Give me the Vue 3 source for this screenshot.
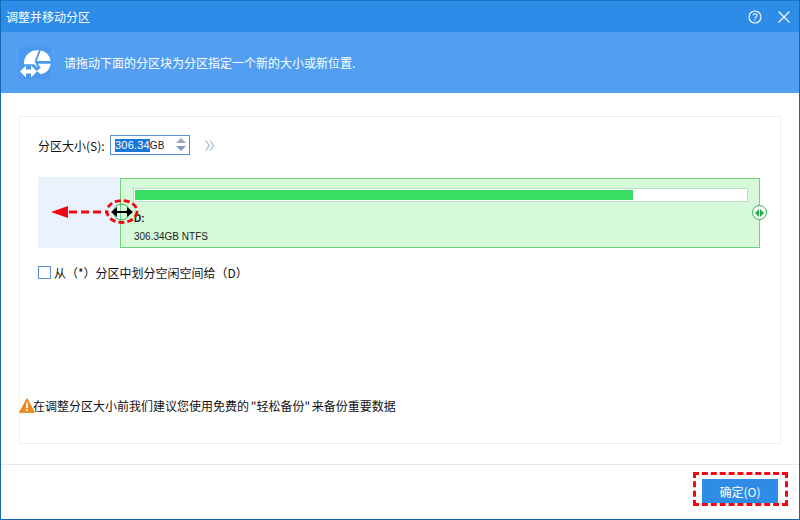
<script setup>
const sizeValue = '306.34'
</script>

<template>
  <div class="window">
    <header class="titlebar">
      <span class="title">调整并移动分区</span>
      <div class="win-actions">
        <svg class="ic-help" width="14" height="14" viewBox="0 0 14 14" fill="none" stroke="#fff">
          <circle cx="7" cy="7" r="6" stroke-width="1.1" />
          <path d="M5.1 5.6c0-1.2.9-1.900 1.900-1.900s1.900.7 1.900 1.700c0 1.500-1.900 1.500-1.900 3" stroke-width="1.1" />
          <path d="M7 9.4v1.2" stroke-width="1.2" />
        </svg>
        <svg width="12" height="12" viewBox="0 0 12 12" stroke="#fff" stroke-width="1.1">
          <path d="M.5.5l11 11M11.500.5l-11 11" />
        </svg>
      </div>
    </header>

    <section class="banner">
      <svg class="banner-icon" width="32" height="32" viewBox="0 0 32 32">
        <rect width="32" height="32" fill="#4b99ee" />
        <path d="M20 3.300A13 13 0 0 0 5 17.300H15L19 20.700 16.700 16.700 15.700 14z" fill="#fff" />
        <path d="M21.700 3.500A13 13 0 0 1 31.700 14H17.700z" fill="#fff" />
        <path d="M19 16.700H31.700A13 13 0 0 1 21.700 27.300L17.700 24 21.700 20.700z" fill="#fff" />
        <path d="M1 24.500l6-6v4h5v-4l6 6-6 6v-4H7v4z" fill="#fff" />
      </svg>
      <p class="banner-text">请拖动下面的分区块为分区指定一个新的大小或新位置.</p>
    </section>

    <main class="content">
      <div class="panel">
        <div class="size-row">
          <label class="size-label">分区大小(S):</label>
          <div class="size-input">
            <span class="selected">{{ sizeValue }}</span><span class="unit">GB</span>
            <span class="spin"><i class="up"></i><i class="down"></i></span>
          </div>
          <svg class="chevrons" width="10" height="11" viewBox="0 0 10 11" fill="none" stroke="#9db8dd" stroke-width="1.200">
            <path d="M.7.5l3.600 5-3.600 5M5 .5l3.600 5-3.600 5" />
          </svg>
        </div>

        <div class="strip">
          <div class="free"></div>
          <div class="partition">
            <div class="usage"><div class="usage-fill"></div></div>
            <div class="drive">D:</div>
            <div class="fs">306.34GB NTFS</div>
            <span class="handle-right"><i class="tri-l"></i><i class="tri-r"></i></span>
          </div>

          <svg class="annotation" width="104" height="44" viewBox="0 0 104 44" fill="none">
            <circle cx="83.500" cy="21" r="8" stroke="#37b34a" stroke-width="1" />
            <path d="M79 19.500v3M88 19.500v3M82 21h3" stroke="#37b34a" stroke-width="1" />
            <path d="M74 21h19" stroke="#000" stroke-width="2" />
            <path d="M73 21l6-5v10zM95 21l-6-5v10z" fill="#000" />
            <ellipse cx="84" cy="20.500" rx="15" ry="11" stroke="#f30512" stroke-width="2.800" stroke-dasharray="6 3" />
            <path d="M31 21h37" stroke="#f30512" stroke-width="2.800" stroke-dasharray="8 4" />
            <path d="M13 21l17-6v12z" fill="#f30512" />
          </svg>
        </div>

        <label class="check-row">
          <span class="checkbox"></span>
          <span>从（*）分区中划分空闲空间给（D）</span>
        </label>

        <div class="notice">
          <svg width="16" height="15" viewBox="0 0 16 15">
            <path d="M8 .7l7.300 13.600H.7z" fill="#f08a1d" stroke="#e77d10" stroke-linejoin="round" />
            <path d="M8 4.500v5.500" stroke="#fff" stroke-width="1.800" />
            <path d="M8 11v2" stroke="#fff" stroke-width="1.800" />
          </svg>
          <span class="notice-text">在调整分区大小前我们建议您使用免费的 "轻松备份" 来备份重要数据</span>
        </div>
      </div>
    </main>

    <footer class="footer">
      <div class="ok-outline">
        <button class="ok">确定(O)</button>
      </div>
    </footer>
  </div>
</template>

<style>
html, body { margin: 0; padding: 0; background: #fff; }
</style>

<style scoped>
.window {
  width: 800px;
  height: 520px;
  box-sizing: border-box;
  border: 1px solid #1268b3;
  border-top-color: #1a73c4;
  display: flex;
  flex-direction: column;
  background: #fff;
  font-family: "Noto Sans CJK SC", "Liberation Sans", sans-serif;
  font-size: 12px;
  color: #111;
  overflow: hidden;
}
.titlebar {
  height: 31px;
  flex: none;
  background: #2c8ce8;
  color: #fff;
  display: flex;
  align-items: center;
  justify-content: space-between;
  padding: 0 9px 0 5px;
}
.title { font-size: 12px; }
.win-actions { display: flex; align-items: center; gap: 16px; }
.banner {
  height: 61px;
  flex: none;
  background: #529ff2;
  display: flex;
  align-items: center;
  padding-left: 18px;
  box-sizing: border-box;
}
.banner-icon { flex: none; }
.banner-text { margin: 0 0 0 13px; color: #fff; font-size: 12px; }
.content {
  flex: 1;
  min-height: 0;
  padding: 23px 18px 20px;
  box-sizing: border-box;
  display: flex;
}
.panel {
  flex: 1;
  border: 1px solid #eef1f8;
  padding: 17px 19px 0 18px;
  display: flex;
  flex-direction: column;
  box-sizing: border-box;
}
.size-row { display: flex; align-items: center; height: 22px; }
.size-label { width: 72px; flex: none; }
.size-input {
  width: 80px;
  height: 20px;
  box-sizing: border-box;
  border: 1px solid #5b8fd4;
  display: flex;
  align-items: center;
  padding-left: 4px;
  position: relative;
  font-family: "Liberation Sans", sans-serif;
  font-size: 11px;
}
.selected { background: #1878d8; color: #fff; line-height: 13px; letter-spacing: .2px; }
.unit { color: #222; font-size: 10px; }
.spin {
  position: absolute;
  right: 3px;
  top: 2px;
  display: flex;
  flex-direction: column;
  gap: 3px;
}
.spin i { width: 0; height: 0; border-left: 5px solid transparent; border-right: 5px solid transparent; }
.up { border-bottom: 5px solid #9aa9bf; }
.down { border-top: 5px solid #7f99c4; }
.chevrons { margin-left: 15px; }
.strip {
  display: flex;
  height: 71px;
  margin-top: 21px;
  width: 722px;
  position: relative;
}
.free { width: 82px; background: #e9f2fd; flex: none; }
.partition {
  flex: 1;
  position: relative;
  box-sizing: border-box;
  margin-top: 1px;
  border: 1px solid #6fcf7d;
  background: #d6fad9;
  padding: 9px 11px 0 12px;
}
.usage {
  height: 14px;
  box-sizing: border-box;
  border: 1px solid #b5e3bf;
  background: #fff;
  padding: 1px 0 1px 1px;
}
.usage-fill { height: 100%; width: 81.400%; background: #38dd63; }
.drive {
  margin-top: 10px;
  margin-left: 1px;
  font-family: "Liberation Sans", sans-serif;
  font-size: 10px;
  font-weight: 700;
  line-height: 14px;
}
.fs {
  margin-top: 4px;
  margin-left: 1px;
  font-family: "Liberation Sans", sans-serif;
  font-size: 10px;
  line-height: 14px;
  color: #222;
}
.handle-right {
  position: absolute;
  right: -8px;
  top: 26px;
  width: 15px;
  height: 15px;
  box-sizing: border-box;
  border: 1px solid #2fb24c;
  border-radius: 50%;
  background: #fff;
  display: flex;
  align-items: center;
  justify-content: center;
  gap: 1px;
}
.handle-right i { width: 0; height: 0; border-top: 4px solid transparent; border-bottom: 4px solid transparent; }
.tri-l { border-right: 4px solid #1fae45; }
.tri-r { border-left: 4px solid #1fae45; }
.annotation { position: absolute; left: 0; top: 14px; }
.check-row {
  display: flex;
  align-items: center;
  gap: 3px;
  margin-top: 17px;
  height: 14px;
}
.checkbox {
  width: 11px;
  height: 11px;
  border: 1px solid #5b8fd4;
  background: #fff;
  flex: none;
}
.notice {
  display: flex;
  align-items: center;
  margin-top: auto;
  margin-bottom: 30px;
  margin-left: -19px;
  height: 16px;
  color: #111;
}
.notice svg { flex: none; }
.notice-text { margin-left: -2px; word-spacing: -1px; }
.footer {
  height: 55px;
  flex: none;
  border-top: 1px solid #e4e9f2;
  box-sizing: border-box;
  display: flex;
  justify-content: flex-end;
  align-items: flex-start;
  padding: 7px 11px 0 0;
}
.ok-outline {
  border: 3px dashed #f30512;
  padding: 4px 7px 0 6px;
  display: flex;
}
.ok {
  width: 76px;
  height: 24px;
  border: none;
  background: #2e8ce6;
  color: #fff;
  font-family: inherit;
  font-size: 12px;
  padding: 0;
}
</style>
